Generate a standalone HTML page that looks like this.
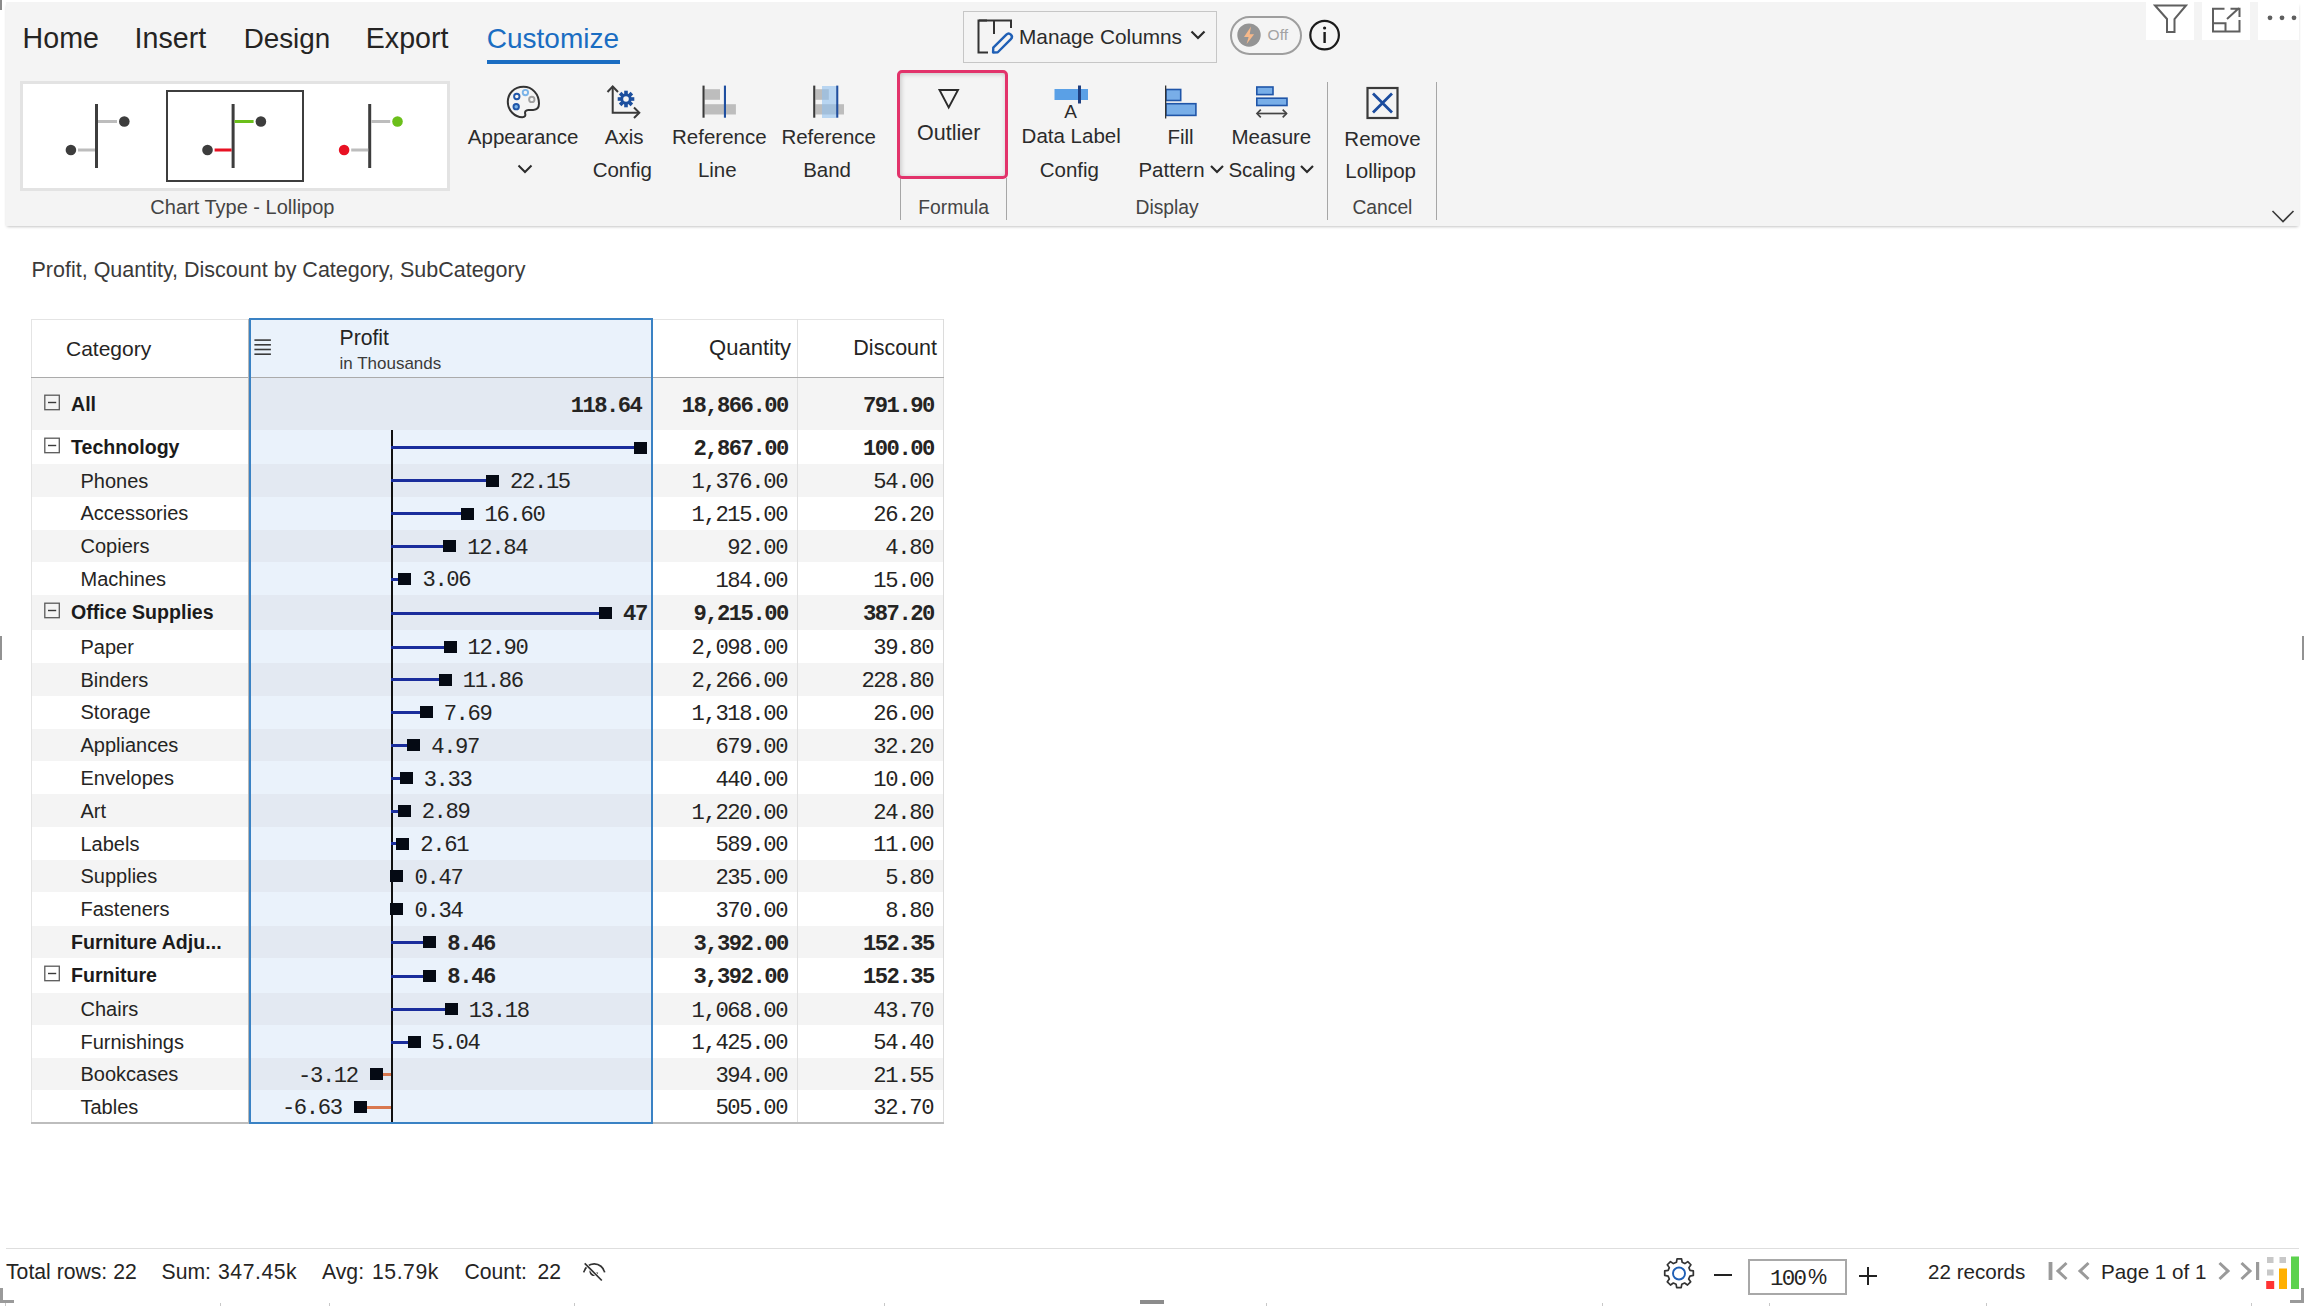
<!DOCTYPE html>
<html><head><meta charset="utf-8"><title>Lollipop</title>
<style>
html,body{margin:0;padding:0;}
body{width:2304px;height:1306px;position:relative;overflow:hidden;background:#fff;font-family:"Liberation Sans",sans-serif;}
.t{position:absolute;white-space:nowrap;}
</style></head><body>

<div style="position:absolute;left:6px;top:2px;width:2293px;height:224px;background:#f4f4f4;box-shadow:0 1.5px 3px -1px rgba(0,0,0,0.3);"></div>
<div style="position:absolute;left:0px;top:0px;width:2px;height:10px;background:#8a8a8a;"></div>
<div class="t" style="left:22.60px;top:24.39px;font:normal 28.6px/28.6px 'Liberation Sans', sans-serif;color:#252423;">Home</div>
<div class="t" style="left:134.60px;top:24.39px;font:normal 28.6px/28.6px 'Liberation Sans', sans-serif;color:#252423;">Insert</div>
<div class="t" style="left:243.70px;top:25.07px;font:normal 27.8px/27.8px 'Liberation Sans', sans-serif;color:#252423;">Design</div>
<div class="t" style="left:365.80px;top:24.39px;font:normal 28.6px/28.6px 'Liberation Sans', sans-serif;color:#252423;">Export</div>
<div class="t" style="left:486.80px;top:24.90px;font:normal 28.0px/28.0px 'Liberation Sans', sans-serif;color:#1a6dc2;">Customize</div>
<div style="position:absolute;left:487px;top:60px;width:133px;height:4px;background:#1a6dc2;"></div>
<div style="position:absolute;left:20px;top:81px;width:430px;height:110px;background:#fff;border:3px solid #e3e3e3;box-sizing:border-box;"></div>
<div style="position:absolute;left:166px;top:90px;width:138px;height:92px;border:2px solid #3d3d3d;box-sizing:border-box;"></div>
<svg style="position:absolute;left:0px;top:0px;" width="460" height="200" viewBox="0 0 460 200"><rect x="95" y="104" width="3" height="64" fill="#3d3d3d"/><rect x="98" y="120" width="19" height="3" fill="#bdbdbd"/><circle cx="124.3" cy="121.5" r="5.3" fill="#3d3d3d"/><rect x="78" y="148.5" width="17" height="3" fill="#bdbdbd"/><circle cx="70.9" cy="150" r="5.3" fill="#3d3d3d"/><rect x="231.6" y="104" width="3" height="64" fill="#3d3d3d"/><rect x="234.6" y="120" width="19" height="3" fill="#6bbf1a"/><circle cx="260.9" cy="121.5" r="5.3" fill="#3d3d3d"/><rect x="214.6" y="148.5" width="17" height="3" fill="#e81123"/><circle cx="207.5" cy="150" r="5.3" fill="#3d3d3d"/><rect x="368.2" y="104" width="3" height="64" fill="#3d3d3d"/><rect x="371.2" y="120" width="19" height="3" fill="#bdbdbd"/><circle cx="397.5" cy="121.5" r="5.3" fill="#6bbf1a"/><rect x="351.2" y="148.5" width="17" height="3" fill="#bdbdbd"/><circle cx="344.09999999999997" cy="150" r="5.3" fill="#e81123"/></svg>
<div class="t" style="left:-57.60px;width:600px;text-align:center;top:197.07px;font:normal 20.0px/20.0px 'Liberation Sans', sans-serif;color:#444;">Chart Type - Lollipop</div>
<svg style="position:absolute;left:505px;top:84px;" width="38" height="38" viewBox="0 0 38 38">
<path d="M18.5 2.8 C9 2.8 2.8 9.5 2.8 17.8 C2.8 26.5 9.8 33.2 17.3 33.2 C20 33.2 20.7 31.6 20.2 29.8 C19.6 27.6 20.8 25.9 23.3 25.9 L28.2 25.9 C32 25.9 34 23.2 34 19.6 C34 10 27.3 2.8 18.5 2.8 Z" fill="none" stroke="#333" stroke-width="2"/>
<circle cx="11.8" cy="12.5" r="2.7" fill="none" stroke="#1f55a8" stroke-width="1.9"/>
<circle cx="20.4" cy="8.6" r="2.7" fill="none" stroke="#7ab3e8" stroke-width="1.9"/>
<circle cx="26.8" cy="15.4" r="2.7" fill="none" stroke="#a0a0a0" stroke-width="1.9"/>
<circle cx="11.2" cy="22.7" r="2.7" fill="#7ab3e8" stroke="#1f55a8" stroke-width="1.9"/>
</svg>
<div class="t" style="left:223.10px;width:600px;text-align:center;top:126.55px;font:normal 20.5px/20.5px 'Liberation Sans', sans-serif;color:#2b2b2b;">Appearance</div>
<svg style="position:absolute;left:515px;top:162px;" width="20" height="14" viewBox="0 0 20 14"><path d="M3.5 3.5 L10 10 L16.5 3.5" fill="none" stroke="#2b2b2b" stroke-width="2"/></svg>
<svg style="position:absolute;left:598px;top:82px;" width="46" height="40" viewBox="0 0 46 40">
<path d="M14.7 4.5 L14.7 30.7 L41 30.7" fill="none" stroke="#3a3a3a" stroke-width="2"/>
<path d="M9.5 10 L14.7 4.5 L20 10" fill="none" stroke="#3a3a3a" stroke-width="2"/>
<path d="M36 25.5 L41.3 30.7 L36 36" fill="none" stroke="#3a3a3a" stroke-width="2"/>
<g transform="translate(28,17)">
<circle r="5.6" fill="#1c4f9e"/>
<g fill="#1c4f9e">
<rect x="-1.8" y="-8.3" width="3.6" height="16.6"/>
<rect x="-1.8" y="-8.3" width="3.6" height="16.6" transform="rotate(45)"/>
<rect x="-1.8" y="-8.3" width="3.6" height="16.6" transform="rotate(90)"/>
<rect x="-1.8" y="-8.3" width="3.6" height="16.6" transform="rotate(135)"/>
</g>
<circle r="2.8" fill="#f4f4f4"/>
</g>
</svg>
<div class="t" style="left:324.20px;width:600px;text-align:center;top:126.55px;font:normal 20.5px/20.5px 'Liberation Sans', sans-serif;color:#2b2b2b;">Axis</div>
<div class="t" style="left:322.30px;width:600px;text-align:center;top:159.65px;font:normal 20.5px/20.5px 'Liberation Sans', sans-serif;color:#2b2b2b;">Config</div>
<svg style="position:absolute;left:700px;top:84px;" width="40" height="36" viewBox="0 0 40 36">
<rect x="4.6" y="5.2" width="15.4" height="10.6" fill="#bdbdbd"/>
<rect x="4.6" y="20.2" width="31.3" height="10.3" fill="#bdbdbd"/>
<rect x="2.5" y="1.6" width="2.1" height="32.1" fill="#3a3a3a"/>
<rect x="23.9" y="1.6" width="2.1" height="32.1" fill="#1f4fa0"/>
</svg>
<div class="t" style="left:419.30px;width:600px;text-align:center;top:126.55px;font:normal 20.5px/20.5px 'Liberation Sans', sans-serif;color:#2b2b2b;">Reference</div>
<div class="t" style="left:417.30px;width:600px;text-align:center;top:159.65px;font:normal 20.5px/20.5px 'Liberation Sans', sans-serif;color:#2b2b2b;">Line</div>
<svg style="position:absolute;left:810px;top:84px;" width="40" height="36" viewBox="0 0 40 36">
<rect x="5.4" y="5.2" width="13.4" height="10.6" fill="#bdbdbd"/>
<rect x="5.4" y="20.2" width="28.6" height="10.3" fill="#bdbdbd"/>
<rect x="12" y="2" width="14.2" height="32" fill="#8fc0ef" fill-opacity="0.6"/>
<rect x="3.2" y="1.6" width="2.1" height="32.1" fill="#3a3a3a"/>
<rect x="26.2" y="1.6" width="2.1" height="32.1" fill="#1f4fa0"/>
</svg>
<div class="t" style="left:528.70px;width:600px;text-align:center;top:126.55px;font:normal 20.5px/20.5px 'Liberation Sans', sans-serif;color:#2b2b2b;">Reference</div>
<div class="t" style="left:527.10px;width:600px;text-align:center;top:159.65px;font:normal 20.5px/20.5px 'Liberation Sans', sans-serif;color:#2b2b2b;">Band</div>
<div style="position:absolute;left:900px;top:178px;width:1.3px;height:42px;background:#a6a6a6;"></div>
<div style="position:absolute;left:1006px;top:178px;width:1.3px;height:42px;background:#a6a6a6;"></div>
<div style="position:absolute;left:1327px;top:82px;width:1.3px;height:138px;background:#a6a6a6;"></div>
<div style="position:absolute;left:1435.6px;top:82px;width:1.3px;height:138px;background:#a6a6a6;"></div>
<div style="position:absolute;left:897px;top:70px;width:111px;height:108.5px;border:3px solid #e2336b;border-radius:5px;box-sizing:border-box;box-shadow:inset 1px 1px 5px rgba(0,0,0,0.2);"></div>
<svg style="position:absolute;left:934px;top:86px;" width="30" height="26" viewBox="0 0 30 26"><path d="M5.5 4 L24 4 L14.7 21.5 Z" fill="none" stroke="#2b2b2b" stroke-width="1.9" stroke-linejoin="miter"/></svg>
<div class="t" style="left:648.70px;width:600px;text-align:center;top:122.80px;font:normal 21.5px/21.5px 'Liberation Sans', sans-serif;color:#2b2b2b;">Outlier</div>
<div class="t" style="left:653.60px;width:600px;text-align:center;top:197.86px;font:normal 19.3px/19.3px 'Liberation Sans', sans-serif;color:#444;">Formula</div>
<svg style="position:absolute;left:1050px;top:82px;" width="42" height="40" viewBox="0 0 42 40">
<rect x="4.5" y="7" width="33.5" height="11" fill="#5aa0e6"/>
<rect x="28" y="3.5" width="3" height="18" fill="#1f3f80"/>
<text x="20.5" y="35.5" font-family="Liberation Sans" font-weight="normal" font-size="19" fill="#2b2b2b" text-anchor="middle">A</text>
</svg>
<div class="t" style="left:771.20px;width:600px;text-align:center;top:126.15px;font:normal 20.5px/20.5px 'Liberation Sans', sans-serif;color:#2b2b2b;">Data Label</div>
<div class="t" style="left:769.40px;width:600px;text-align:center;top:159.65px;font:normal 20.5px/20.5px 'Liberation Sans', sans-serif;color:#2b2b2b;">Config</div>
<svg style="position:absolute;left:1160px;top:82px;" width="42" height="40" viewBox="0 0 42 40">
<rect x="6" y="7.5" width="14.7" height="11" fill="#78aee8" stroke="#1f55a8" stroke-width="1.6"/>
<rect x="6" y="21.7" width="29.9" height="11.7" fill="#78aee8" stroke="#1f55a8" stroke-width="1.6"/>
<rect x="5" y="3.5" width="1.3" height="33" fill="#333"/>
</svg>
<div class="t" style="left:880.50px;width:600px;text-align:center;top:126.85px;font:normal 20.5px/20.5px 'Liberation Sans', sans-serif;color:#2b2b2b;">Fill</div>
<div class="t" style="left:871.50px;width:600px;text-align:center;top:159.85px;font:normal 20.5px/20.5px 'Liberation Sans', sans-serif;color:#2b2b2b;">Pattern</div>
<svg style="position:absolute;left:1207px;top:161px;" width="20" height="16" viewBox="0 0 20 16"><path d="M4 5 L10 11 L16 5" fill="none" stroke="#2b2b2b" stroke-width="2.2"/></svg>
<svg style="position:absolute;left:1250px;top:82px;" width="42" height="40" viewBox="0 0 42 40">
<rect x="6.8" y="5" width="16.2" height="7.6" fill="#78aee8" stroke="#1f55a8" stroke-width="1.6"/>
<rect x="6.8" y="16.2" width="30.2" height="7.3" fill="#78aee8" stroke="#1f55a8" stroke-width="1.6"/>
<path d="M7 31.5 L36.5 31.5" stroke="#444" stroke-width="1.7"/>
<path d="M10.8 27.7 L7 31.5 L10.8 35.3 M32.7 27.7 L36.5 31.5 L32.7 35.3" fill="none" stroke="#444" stroke-width="1.7"/>
</svg>
<div class="t" style="left:971.40px;width:600px;text-align:center;top:126.85px;font:normal 20.5px/20.5px 'Liberation Sans', sans-serif;color:#2b2b2b;">Measure</div>
<div class="t" style="left:962.00px;width:600px;text-align:center;top:159.85px;font:normal 20.5px/20.5px 'Liberation Sans', sans-serif;color:#2b2b2b;">Scaling</div>
<svg style="position:absolute;left:1297px;top:161px;" width="20" height="16" viewBox="0 0 20 16"><path d="M4 5 L10 11 L16 5" fill="none" stroke="#2b2b2b" stroke-width="2.2"/></svg>
<div class="t" style="left:867.10px;width:600px;text-align:center;top:198.06px;font:normal 19.3px/19.3px 'Liberation Sans', sans-serif;color:#444;">Display</div>
<svg style="position:absolute;left:1362px;top:84px;" width="40" height="40" viewBox="0 0 40 40">
<rect x="5.5" y="4" width="30" height="30" fill="none" stroke="#3a3a3a" stroke-width="2.2"/>
<path d="M11 9.5 L30 28.5 M30 9.5 L11 28.5" stroke="#1b4c9e" stroke-width="2.8"/>
</svg>
<div class="t" style="left:1082.50px;width:600px;text-align:center;top:128.65px;font:normal 20.5px/20.5px 'Liberation Sans', sans-serif;color:#2b2b2b;">Remove</div>
<div class="t" style="left:1080.70px;width:600px;text-align:center;top:160.85px;font:normal 20.5px/20.5px 'Liberation Sans', sans-serif;color:#2b2b2b;">Lollipop</div>
<div class="t" style="left:1082.40px;width:600px;text-align:center;top:198.06px;font:normal 19.3px/19.3px 'Liberation Sans', sans-serif;color:#444;">Cancel</div>
<div style="position:absolute;left:962.5px;top:11px;width:254.5px;height:51.5px;border:1.5px solid #c6c6c6;box-sizing:border-box;"></div>
<svg style="position:absolute;left:973.5px;top:15.5px;" width="42" height="42" viewBox="0 0 42 42">
<path d="M13 4.5 L4.5 4.5 L4.5 36.5 L14 36.5" fill="none" stroke="#333" stroke-width="2"/>
<path d="M5 4.5 L37 4.5 L37 12" fill="none" stroke="#333" stroke-width="2"/>
<path d="M20 5 L20 18" fill="none" stroke="#333" stroke-width="2"/>
<g transform="translate(27.9,27.6) rotate(-45)"><path d="M-12.5 0 L-9 -3.2 L9.5 -3.2 Q12.7 -3.2 12.7 0 Q12.7 3.2 9.5 3.2 L-9 3.2 Z" fill="none" stroke="#1f5fb5" stroke-width="2.4" stroke-linejoin="round"/></g>
</svg>
<div class="t" style="left:1019.00px;top:26.89px;font:normal 20.8px/20.8px 'Liberation Sans', sans-serif;color:#2b2b2b;">Manage Columns</div>
<svg style="position:absolute;left:1188px;top:28px;" width="20" height="14" viewBox="0 0 20 14"><path d="M3.5 3.5 L10 10 L16.5 3.5" fill="none" stroke="#2b2b2b" stroke-width="2.2"/></svg>
<div style="position:absolute;left:1230px;top:16px;width:72px;height:39px;border:2px solid #9e9e9e;border-radius:20px;box-sizing:border-box;"></div>
<svg style="position:absolute;left:1237px;top:23px;" width="24" height="24" viewBox="0 0 24 24">
<circle cx="12" cy="12.1" r="11.7" fill="#949494"/>
<path d="M14 3.6 L7 14 L11.6 14 L9.6 21.1 L17.1 11.3 L12.7 11.3 Z" fill="#f7b98a"/>
</svg>
<div class="t" style="left:977.80px;width:600px;text-align:center;top:27.48px;font:normal 15.5px/15.5px 'Liberation Sans', sans-serif;color:#a3a3a3;">Off</div>
<svg style="position:absolute;left:1308px;top:19px;" width="34" height="34" viewBox="0 0 34 34">
<circle cx="16.6" cy="16.1" r="14.3" fill="none" stroke="#1a1a1a" stroke-width="2.2"/>
<rect x="15.4" y="13" width="2.4" height="11" fill="#1a1a1a"/>
<circle cx="16.6" cy="9" r="1.6" fill="#1a1a1a"/>
</svg>
<div style="position:absolute;left:2146px;top:0px;width:48px;height:40px;background:#fff;"></div>
<div style="position:absolute;left:2202px;top:0px;width:48px;height:40px;background:#fff;"></div>
<div style="position:absolute;left:2258px;top:0px;width:41px;height:40px;background:#fff;"></div>
<svg style="position:absolute;left:2150px;top:0px;" width="40" height="40" viewBox="0 0 40 40"><path d="M5 5.5 L36 5.5 L24.5 19 L24.5 32 L17 32 L17 19 Z" fill="none" stroke="#5f5f5f" stroke-width="2"/></svg>
<svg style="position:absolute;left:2208px;top:4px;" width="36" height="32" viewBox="0 0 36 32">
<path d="M16.5 4.7 L5 4.7 L5 27.4 L31.5 27.4 L31.5 16" fill="none" stroke="#5f5f5f" stroke-width="2"/>
<path d="M5 19.2 L17.5 19.2 L17.5 27.4" fill="none" stroke="#5f5f5f" stroke-width="2"/>
<path d="M19 15 L31 4 M22.5 4.7 L31.5 4.7 L31.5 13" fill="none" stroke="#5f5f5f" stroke-width="2"/>
</svg>
<svg style="position:absolute;left:2262px;top:8px;" width="40" height="20" viewBox="0 0 40 20"><circle cx="8" cy="9.8" r="2.4" fill="#5f5f5f"/><circle cx="20" cy="9.8" r="2.4" fill="#5f5f5f"/><circle cx="32" cy="9.8" r="2.4" fill="#5f5f5f"/></svg>
<svg style="position:absolute;left:2268px;top:206px;" width="30" height="20" viewBox="0 0 30 20"><path d="M4.5 5 L15 15.5 L25.5 5" fill="none" stroke="#3a3a3a" stroke-width="1.6"/></svg>
<div class="t" style="left:31.50px;top:260.10px;font:normal 21.5px/21.5px 'Liberation Sans', sans-serif;color:#3b3a39;">Profit, Quantity, Discount by Category, SubCategory</div>
<div style="position:absolute;left:31px;top:319px;width:913px;height:59px;background:#fff;"></div>
<div style="position:absolute;left:31px;top:378px;width:913px;height:52px;background:#f4f4f4;"></div>
<div style="position:absolute;left:251px;top:378px;width:400px;height:52px;background:#e3e9f2;"></div>
<div style="position:absolute;left:31px;top:430px;width:913px;height:34px;background:#ffffff;"></div>
<div style="position:absolute;left:251px;top:430px;width:400px;height:34px;background:#eaf2fb;"></div>
<div style="position:absolute;left:31px;top:464px;width:913px;height:32.5px;background:#f4f4f4;"></div>
<div style="position:absolute;left:251px;top:464px;width:400px;height:32.5px;background:#e3e9f2;"></div>
<div style="position:absolute;left:31px;top:496.5px;width:913px;height:33.0px;background:#ffffff;"></div>
<div style="position:absolute;left:251px;top:496.5px;width:400px;height:33.0px;background:#eaf2fb;"></div>
<div style="position:absolute;left:31px;top:529.5px;width:913px;height:32.5px;background:#f4f4f4;"></div>
<div style="position:absolute;left:251px;top:529.5px;width:400px;height:32.5px;background:#e3e9f2;"></div>
<div style="position:absolute;left:31px;top:562px;width:913px;height:33px;background:#ffffff;"></div>
<div style="position:absolute;left:251px;top:562px;width:400px;height:33px;background:#eaf2fb;"></div>
<div style="position:absolute;left:31px;top:595px;width:913px;height:34.60000000000002px;background:#f4f4f4;"></div>
<div style="position:absolute;left:251px;top:595px;width:400px;height:34.60000000000002px;background:#e3e9f2;"></div>
<div style="position:absolute;left:31px;top:629.6px;width:913px;height:33.39999999999998px;background:#ffffff;"></div>
<div style="position:absolute;left:251px;top:629.6px;width:400px;height:33.39999999999998px;background:#eaf2fb;"></div>
<div style="position:absolute;left:31px;top:663px;width:913px;height:32.5px;background:#f4f4f4;"></div>
<div style="position:absolute;left:251px;top:663px;width:400px;height:32.5px;background:#e3e9f2;"></div>
<div style="position:absolute;left:31px;top:695.5px;width:913px;height:33.0px;background:#ffffff;"></div>
<div style="position:absolute;left:251px;top:695.5px;width:400px;height:33.0px;background:#eaf2fb;"></div>
<div style="position:absolute;left:31px;top:728.5px;width:913px;height:32.5px;background:#f4f4f4;"></div>
<div style="position:absolute;left:251px;top:728.5px;width:400px;height:32.5px;background:#e3e9f2;"></div>
<div style="position:absolute;left:31px;top:761px;width:913px;height:33.299999999999955px;background:#ffffff;"></div>
<div style="position:absolute;left:251px;top:761px;width:400px;height:33.299999999999955px;background:#eaf2fb;"></div>
<div style="position:absolute;left:31px;top:794.3px;width:913px;height:32.30000000000007px;background:#f4f4f4;"></div>
<div style="position:absolute;left:251px;top:794.3px;width:400px;height:32.30000000000007px;background:#e3e9f2;"></div>
<div style="position:absolute;left:31px;top:826.6px;width:913px;height:33.19999999999993px;background:#ffffff;"></div>
<div style="position:absolute;left:251px;top:826.6px;width:400px;height:33.19999999999993px;background:#eaf2fb;"></div>
<div style="position:absolute;left:31px;top:859.8px;width:913px;height:32.30000000000007px;background:#f4f4f4;"></div>
<div style="position:absolute;left:251px;top:859.8px;width:400px;height:32.30000000000007px;background:#e3e9f2;"></div>
<div style="position:absolute;left:31px;top:892.1px;width:913px;height:33.5px;background:#ffffff;"></div>
<div style="position:absolute;left:251px;top:892.1px;width:400px;height:33.5px;background:#eaf2fb;"></div>
<div style="position:absolute;left:31px;top:925.6px;width:913px;height:32.39999999999998px;background:#f4f4f4;"></div>
<div style="position:absolute;left:251px;top:925.6px;width:400px;height:32.39999999999998px;background:#e3e9f2;"></div>
<div style="position:absolute;left:31px;top:958px;width:913px;height:34.799999999999955px;background:#ffffff;"></div>
<div style="position:absolute;left:251px;top:958px;width:400px;height:34.799999999999955px;background:#eaf2fb;"></div>
<div style="position:absolute;left:31px;top:992.8px;width:913px;height:32.200000000000045px;background:#f4f4f4;"></div>
<div style="position:absolute;left:251px;top:992.8px;width:400px;height:32.200000000000045px;background:#e3e9f2;"></div>
<div style="position:absolute;left:31px;top:1025px;width:913px;height:32.700000000000045px;background:#ffffff;"></div>
<div style="position:absolute;left:251px;top:1025px;width:400px;height:32.700000000000045px;background:#eaf2fb;"></div>
<div style="position:absolute;left:31px;top:1057.7px;width:913px;height:32.59999999999991px;background:#f4f4f4;"></div>
<div style="position:absolute;left:251px;top:1057.7px;width:400px;height:32.59999999999991px;background:#e3e9f2;"></div>
<div style="position:absolute;left:31px;top:1090.3px;width:913px;height:32.200000000000045px;background:#ffffff;"></div>
<div style="position:absolute;left:251px;top:1090.3px;width:400px;height:32.200000000000045px;background:#eaf2fb;"></div>
<div style="position:absolute;left:251px;top:320px;width:400px;height:58px;background:#eaf2fb;"></div>
<div style="position:absolute;left:31px;top:318.5px;width:913px;height:1px;background:#e4e4e4;"></div>
<div style="position:absolute;left:31px;top:319px;width:1px;height:804px;background:#e4e4e4;"></div>
<div style="position:absolute;left:943px;top:319px;width:1px;height:804px;background:#dcdcdc;"></div>
<div style="position:absolute;left:797px;top:319px;width:1px;height:804px;background:#e0e0e0;"></div>
<div style="position:absolute;left:31px;top:376.5px;width:913px;height:1.6px;background:#ababab;"></div>
<div style="position:absolute;left:31px;top:1122px;width:913px;height:1.5px;background:#bdbdbd;"></div>
<div style="position:absolute;left:248px;top:319px;width:1px;height:804px;background:#b8b8b8;"></div>
<div class="t" style="left:66.00px;top:337.62px;font:normal 21px/21px 'Liberation Sans', sans-serif;color:#252423;">Category</div>
<div class="t" style="left:339.50px;top:327.45px;font:normal 21.2px/21.2px 'Liberation Sans', sans-serif;color:#252423;">Profit</div>
<div class="t" style="left:339.50px;top:355.21px;font:normal 17px/17px 'Liberation Sans', sans-serif;color:#3b3a39;">in Thousands</div>
<div class="t" style="left:191.00px;width:600px;text-align:right;top:337.38px;font:normal 22.0px/22.0px 'Liberation Sans', sans-serif;color:#252423;">Quantity</div>
<div class="t" style="left:337.00px;width:600px;text-align:right;top:337.80px;font:normal 21.5px/21.5px 'Liberation Sans', sans-serif;color:#252423;">Discount</div>
<svg style="position:absolute;left:252px;top:336px;" width="22" height="22" viewBox="0 0 22 22"><rect x="2.4" y="3.3" width="16.5" height="1.6" fill="#3a3a3a"/><rect x="2.4" y="8.0" width="16.5" height="1.6" fill="#3a3a3a"/><rect x="2.4" y="12.7" width="16.5" height="1.6" fill="#3a3a3a"/><rect x="2.4" y="17.4" width="16.5" height="1.6" fill="#3a3a3a"/></svg>
<svg style="position:absolute;left:43px;top:393px;" width="18" height="18" viewBox="0 0 18 18"><rect x="1.8" y="2.2" width="14.5" height="14.5" fill="none" stroke="#5a5a5a" stroke-width="1.3"/><rect x="5" y="8.8" width="8.2" height="1.4" fill="#3a3a3a"/></svg>
<div class="t" style="left:71.00px;top:394.71px;font:bold 19.6px/19.6px 'Liberation Sans', sans-serif;color:#1b1b1b;">All</div>
<div class="t" style="left:487.70px;width:300px;text-align:right;top:396.08px;font:bold 22.2px/22.2px 'Liberation Mono', monospace;color:#252423;letter-spacing:-1.55px;">18,866.00</div>
<div class="t" style="left:633.70px;width:300px;text-align:right;top:396.08px;font:bold 22.2px/22.2px 'Liberation Mono', monospace;color:#252423;letter-spacing:-1.55px;">791.90</div>
<div class="t" style="left:341.30px;width:300px;text-align:right;top:396.08px;font:bold 22.2px/22.2px 'Liberation Mono', monospace;color:#252423;letter-spacing:-1.55px;">118.64</div>
<svg style="position:absolute;left:43px;top:436px;" width="18" height="18" viewBox="0 0 18 18"><rect x="1.8" y="2.2" width="14.5" height="14.5" fill="none" stroke="#5a5a5a" stroke-width="1.3"/><rect x="5" y="8.8" width="8.2" height="1.4" fill="#3a3a3a"/></svg>
<div class="t" style="left:71.00px;top:437.71px;font:bold 19.6px/19.6px 'Liberation Sans', sans-serif;color:#1b1b1b;">Technology</div>
<div class="t" style="left:487.70px;width:300px;text-align:right;top:439.08px;font:bold 22.2px/22.2px 'Liberation Mono', monospace;color:#252423;letter-spacing:-1.55px;">2,867.00</div>
<div class="t" style="left:633.70px;width:300px;text-align:right;top:439.08px;font:bold 22.2px/22.2px 'Liberation Mono', monospace;color:#252423;letter-spacing:-1.55px;">100.00</div>
<div class="t" style="left:80.50px;top:470.62px;font:normal 20.0px/20.0px 'Liberation Sans', sans-serif;color:#252423;">Phones</div>
<div class="t" style="left:487.20px;width:300px;text-align:right;top:472.33px;font:normal 22.2px/22.2px 'Liberation Mono', monospace;color:#252423;letter-spacing:-1.35px;">1,376.00</div>
<div class="t" style="left:633.20px;width:300px;text-align:right;top:472.33px;font:normal 22.2px/22.2px 'Liberation Mono', monospace;color:#252423;letter-spacing:-1.35px;">54.00</div>
<div class="t" style="left:80.50px;top:503.37px;font:normal 20.0px/20.0px 'Liberation Sans', sans-serif;color:#252423;">Accessories</div>
<div class="t" style="left:487.20px;width:300px;text-align:right;top:505.08px;font:normal 22.2px/22.2px 'Liberation Mono', monospace;color:#252423;letter-spacing:-1.35px;">1,215.00</div>
<div class="t" style="left:633.20px;width:300px;text-align:right;top:505.08px;font:normal 22.2px/22.2px 'Liberation Mono', monospace;color:#252423;letter-spacing:-1.35px;">26.20</div>
<div class="t" style="left:80.50px;top:536.12px;font:normal 20.0px/20.0px 'Liberation Sans', sans-serif;color:#252423;">Copiers</div>
<div class="t" style="left:487.20px;width:300px;text-align:right;top:537.83px;font:normal 22.2px/22.2px 'Liberation Mono', monospace;color:#252423;letter-spacing:-1.35px;">92.00</div>
<div class="t" style="left:633.20px;width:300px;text-align:right;top:537.83px;font:normal 22.2px/22.2px 'Liberation Mono', monospace;color:#252423;letter-spacing:-1.35px;">4.80</div>
<div class="t" style="left:80.50px;top:568.87px;font:normal 20.0px/20.0px 'Liberation Sans', sans-serif;color:#252423;">Machines</div>
<div class="t" style="left:487.20px;width:300px;text-align:right;top:570.58px;font:normal 22.2px/22.2px 'Liberation Mono', monospace;color:#252423;letter-spacing:-1.35px;">184.00</div>
<div class="t" style="left:633.20px;width:300px;text-align:right;top:570.58px;font:normal 22.2px/22.2px 'Liberation Mono', monospace;color:#252423;letter-spacing:-1.35px;">15.00</div>
<svg style="position:absolute;left:43px;top:601px;" width="18" height="18" viewBox="0 0 18 18"><rect x="1.8" y="2.2" width="14.5" height="14.5" fill="none" stroke="#5a5a5a" stroke-width="1.3"/><rect x="5" y="8.8" width="8.2" height="1.4" fill="#3a3a3a"/></svg>
<div class="t" style="left:71.00px;top:603.01px;font:bold 19.6px/19.6px 'Liberation Sans', sans-serif;color:#1b1b1b;">Office Supplies</div>
<div class="t" style="left:487.70px;width:300px;text-align:right;top:604.38px;font:bold 22.2px/22.2px 'Liberation Mono', monospace;color:#252423;letter-spacing:-1.55px;">9,215.00</div>
<div class="t" style="left:633.70px;width:300px;text-align:right;top:604.38px;font:bold 22.2px/22.2px 'Liberation Mono', monospace;color:#252423;letter-spacing:-1.55px;">387.20</div>
<div class="t" style="left:80.50px;top:636.67px;font:normal 20.0px/20.0px 'Liberation Sans', sans-serif;color:#252423;">Paper</div>
<div class="t" style="left:487.20px;width:300px;text-align:right;top:638.38px;font:normal 22.2px/22.2px 'Liberation Mono', monospace;color:#252423;letter-spacing:-1.35px;">2,098.00</div>
<div class="t" style="left:633.20px;width:300px;text-align:right;top:638.38px;font:normal 22.2px/22.2px 'Liberation Mono', monospace;color:#252423;letter-spacing:-1.35px;">39.80</div>
<div class="t" style="left:80.50px;top:669.62px;font:normal 20.0px/20.0px 'Liberation Sans', sans-serif;color:#252423;">Binders</div>
<div class="t" style="left:487.20px;width:300px;text-align:right;top:671.33px;font:normal 22.2px/22.2px 'Liberation Mono', monospace;color:#252423;letter-spacing:-1.35px;">2,266.00</div>
<div class="t" style="left:633.20px;width:300px;text-align:right;top:671.33px;font:normal 22.2px/22.2px 'Liberation Mono', monospace;color:#252423;letter-spacing:-1.35px;">228.80</div>
<div class="t" style="left:80.50px;top:702.37px;font:normal 20.0px/20.0px 'Liberation Sans', sans-serif;color:#252423;">Storage</div>
<div class="t" style="left:487.20px;width:300px;text-align:right;top:704.08px;font:normal 22.2px/22.2px 'Liberation Mono', monospace;color:#252423;letter-spacing:-1.35px;">1,318.00</div>
<div class="t" style="left:633.20px;width:300px;text-align:right;top:704.08px;font:normal 22.2px/22.2px 'Liberation Mono', monospace;color:#252423;letter-spacing:-1.35px;">26.00</div>
<div class="t" style="left:80.50px;top:735.12px;font:normal 20.0px/20.0px 'Liberation Sans', sans-serif;color:#252423;">Appliances</div>
<div class="t" style="left:487.20px;width:300px;text-align:right;top:736.83px;font:normal 22.2px/22.2px 'Liberation Mono', monospace;color:#252423;letter-spacing:-1.35px;">679.00</div>
<div class="t" style="left:633.20px;width:300px;text-align:right;top:736.83px;font:normal 22.2px/22.2px 'Liberation Mono', monospace;color:#252423;letter-spacing:-1.35px;">32.20</div>
<div class="t" style="left:80.50px;top:768.02px;font:normal 20.0px/20.0px 'Liberation Sans', sans-serif;color:#252423;">Envelopes</div>
<div class="t" style="left:487.20px;width:300px;text-align:right;top:769.73px;font:normal 22.2px/22.2px 'Liberation Mono', monospace;color:#252423;letter-spacing:-1.35px;">440.00</div>
<div class="t" style="left:633.20px;width:300px;text-align:right;top:769.73px;font:normal 22.2px/22.2px 'Liberation Mono', monospace;color:#252423;letter-spacing:-1.35px;">10.00</div>
<div class="t" style="left:80.50px;top:800.82px;font:normal 20.0px/20.0px 'Liberation Sans', sans-serif;color:#252423;">Art</div>
<div class="t" style="left:487.20px;width:300px;text-align:right;top:802.53px;font:normal 22.2px/22.2px 'Liberation Mono', monospace;color:#252423;letter-spacing:-1.35px;">1,220.00</div>
<div class="t" style="left:633.20px;width:300px;text-align:right;top:802.53px;font:normal 22.2px/22.2px 'Liberation Mono', monospace;color:#252423;letter-spacing:-1.35px;">24.80</div>
<div class="t" style="left:80.50px;top:833.57px;font:normal 20.0px/20.0px 'Liberation Sans', sans-serif;color:#252423;">Labels</div>
<div class="t" style="left:487.20px;width:300px;text-align:right;top:835.28px;font:normal 22.2px/22.2px 'Liberation Mono', monospace;color:#252423;letter-spacing:-1.35px;">589.00</div>
<div class="t" style="left:633.20px;width:300px;text-align:right;top:835.28px;font:normal 22.2px/22.2px 'Liberation Mono', monospace;color:#252423;letter-spacing:-1.35px;">11.00</div>
<div class="t" style="left:80.50px;top:866.32px;font:normal 20.0px/20.0px 'Liberation Sans', sans-serif;color:#252423;">Supplies</div>
<div class="t" style="left:487.20px;width:300px;text-align:right;top:868.03px;font:normal 22.2px/22.2px 'Liberation Mono', monospace;color:#252423;letter-spacing:-1.35px;">235.00</div>
<div class="t" style="left:633.20px;width:300px;text-align:right;top:868.03px;font:normal 22.2px/22.2px 'Liberation Mono', monospace;color:#252423;letter-spacing:-1.35px;">5.80</div>
<div class="t" style="left:80.50px;top:899.22px;font:normal 20.0px/20.0px 'Liberation Sans', sans-serif;color:#252423;">Fasteners</div>
<div class="t" style="left:487.20px;width:300px;text-align:right;top:900.93px;font:normal 22.2px/22.2px 'Liberation Mono', monospace;color:#252423;letter-spacing:-1.35px;">370.00</div>
<div class="t" style="left:633.20px;width:300px;text-align:right;top:900.93px;font:normal 22.2px/22.2px 'Liberation Mono', monospace;color:#252423;letter-spacing:-1.35px;">8.80</div>
<div class="t" style="left:71.00px;top:932.51px;font:bold 19.6px/19.6px 'Liberation Sans', sans-serif;color:#1b1b1b;">Furniture Adju...</div>
<div class="t" style="left:487.70px;width:300px;text-align:right;top:933.88px;font:bold 22.2px/22.2px 'Liberation Mono', monospace;color:#252423;letter-spacing:-1.55px;">3,392.00</div>
<div class="t" style="left:633.70px;width:300px;text-align:right;top:933.88px;font:bold 22.2px/22.2px 'Liberation Mono', monospace;color:#252423;letter-spacing:-1.55px;">152.35</div>
<svg style="position:absolute;left:43px;top:964px;" width="18" height="18" viewBox="0 0 18 18"><rect x="1.8" y="2.2" width="14.5" height="14.5" fill="none" stroke="#5a5a5a" stroke-width="1.3"/><rect x="5" y="8.8" width="8.2" height="1.4" fill="#3a3a3a"/></svg>
<div class="t" style="left:71.00px;top:966.11px;font:bold 19.6px/19.6px 'Liberation Sans', sans-serif;color:#1b1b1b;">Furniture</div>
<div class="t" style="left:487.70px;width:300px;text-align:right;top:967.48px;font:bold 22.2px/22.2px 'Liberation Mono', monospace;color:#252423;letter-spacing:-1.55px;">3,392.00</div>
<div class="t" style="left:633.70px;width:300px;text-align:right;top:967.48px;font:bold 22.2px/22.2px 'Liberation Mono', monospace;color:#252423;letter-spacing:-1.55px;">152.35</div>
<div class="t" style="left:80.50px;top:999.27px;font:normal 20.0px/20.0px 'Liberation Sans', sans-serif;color:#252423;">Chairs</div>
<div class="t" style="left:487.20px;width:300px;text-align:right;top:1000.98px;font:normal 22.2px/22.2px 'Liberation Mono', monospace;color:#252423;letter-spacing:-1.35px;">1,068.00</div>
<div class="t" style="left:633.20px;width:300px;text-align:right;top:1000.98px;font:normal 22.2px/22.2px 'Liberation Mono', monospace;color:#252423;letter-spacing:-1.35px;">43.70</div>
<div class="t" style="left:80.50px;top:1031.72px;font:normal 20.0px/20.0px 'Liberation Sans', sans-serif;color:#252423;">Furnishings</div>
<div class="t" style="left:487.20px;width:300px;text-align:right;top:1033.43px;font:normal 22.2px/22.2px 'Liberation Mono', monospace;color:#252423;letter-spacing:-1.35px;">1,425.00</div>
<div class="t" style="left:633.20px;width:300px;text-align:right;top:1033.43px;font:normal 22.2px/22.2px 'Liberation Mono', monospace;color:#252423;letter-spacing:-1.35px;">54.40</div>
<div class="t" style="left:80.50px;top:1064.37px;font:normal 20.0px/20.0px 'Liberation Sans', sans-serif;color:#252423;">Bookcases</div>
<div class="t" style="left:487.20px;width:300px;text-align:right;top:1066.08px;font:normal 22.2px/22.2px 'Liberation Mono', monospace;color:#252423;letter-spacing:-1.35px;">394.00</div>
<div class="t" style="left:633.20px;width:300px;text-align:right;top:1066.08px;font:normal 22.2px/22.2px 'Liberation Mono', monospace;color:#252423;letter-spacing:-1.35px;">21.55</div>
<div class="t" style="left:80.50px;top:1096.77px;font:normal 20.0px/20.0px 'Liberation Sans', sans-serif;color:#252423;">Tables</div>
<div class="t" style="left:487.20px;width:300px;text-align:right;top:1098.48px;font:normal 22.2px/22.2px 'Liberation Mono', monospace;color:#252423;letter-spacing:-1.35px;">505.00</div>
<div class="t" style="left:633.20px;width:300px;text-align:right;top:1098.48px;font:normal 22.2px/22.2px 'Liberation Mono', monospace;color:#252423;letter-spacing:-1.35px;">32.70</div>
<div style="position:absolute;left:251px;top:320px;width:397px;height:803px;overflow:hidden;">
<div style="position:absolute;left:140px;top:110px;width:2px;height:693px;background:#111;"></div>
<div style="position:absolute;left:140.00px;top:126.00px;width:249px;height:3px;background:#1a2d9c;"></div>
<div style="position:absolute;left:383.00px;top:122.00px;width:13px;height:12px;background:#050a14;"></div>
<div style="position:absolute;left:140.00px;top:159.00px;width:101px;height:3px;background:#1a2d9c;"></div>
<div style="position:absolute;left:235.00px;top:155.00px;width:13px;height:12px;background:#050a14;"></div>
<div class="t" style="left:259.00px;top:152.23px;font:normal 22.2px/22.2px 'Liberation Mono', monospace;color:#252423;letter-spacing:-1.35px;">22.15</div>
<div style="position:absolute;left:140.00px;top:192.00px;width:76px;height:3px;background:#1a2d9c;"></div>
<div style="position:absolute;left:210.00px;top:188.00px;width:13px;height:12px;background:#050a14;"></div>
<div class="t" style="left:233.54px;top:184.98px;font:normal 22.2px/22.2px 'Liberation Mono', monospace;color:#252423;letter-spacing:-1.35px;">16.60</div>
<div style="position:absolute;left:140.00px;top:225.00px;width:59px;height:3px;background:#1a2d9c;"></div>
<div style="position:absolute;left:192.00px;top:220.00px;width:13px;height:12px;background:#050a14;"></div>
<div class="t" style="left:216.30px;top:217.73px;font:normal 22.2px/22.2px 'Liberation Mono', monospace;color:#252423;letter-spacing:-1.35px;">12.84</div>
<div style="position:absolute;left:140.00px;top:258.00px;width:14px;height:3px;background:#1a2d9c;"></div>
<div style="position:absolute;left:147.00px;top:253.00px;width:13px;height:12px;background:#050a14;"></div>
<div class="t" style="left:171.44px;top:250.48px;font:normal 22.2px/22.2px 'Liberation Mono', monospace;color:#252423;letter-spacing:-1.35px;">3.06</div>
<div style="position:absolute;left:140.00px;top:292.00px;width:214px;height:3px;background:#1a2d9c;"></div>
<div style="position:absolute;left:348.00px;top:287.00px;width:13px;height:12px;background:#050a14;"></div>
<div class="t" style="left:372.07px;top:284.28px;font:bold 22.2px/22.2px 'Liberation Mono', monospace;color:#252423;letter-spacing:-1.35px;">47</div>
<div style="position:absolute;left:140.00px;top:326.00px;width:59px;height:3px;background:#1a2d9c;"></div>
<div style="position:absolute;left:193.00px;top:321.00px;width:13px;height:12px;background:#050a14;"></div>
<div class="t" style="left:216.57px;top:318.28px;font:normal 22.2px/22.2px 'Liberation Mono', monospace;color:#252423;letter-spacing:-1.35px;">12.90</div>
<div style="position:absolute;left:140.00px;top:358.00px;width:54px;height:3px;background:#1a2d9c;"></div>
<div style="position:absolute;left:188.00px;top:354.00px;width:13px;height:12px;background:#050a14;"></div>
<div class="t" style="left:211.80px;top:351.23px;font:normal 22.2px/22.2px 'Liberation Mono', monospace;color:#252423;letter-spacing:-1.35px;">11.86</div>
<div style="position:absolute;left:140.00px;top:391.00px;width:35px;height:3px;background:#1a2d9c;"></div>
<div style="position:absolute;left:169.00px;top:386.00px;width:13px;height:12px;background:#050a14;"></div>
<div class="t" style="left:192.67px;top:383.98px;font:normal 22.2px/22.2px 'Liberation Mono', monospace;color:#252423;letter-spacing:-1.35px;">7.69</div>
<div style="position:absolute;left:140.00px;top:424.00px;width:23px;height:3px;background:#1a2d9c;"></div>
<div style="position:absolute;left:156.00px;top:419.00px;width:13px;height:12px;background:#050a14;"></div>
<div class="t" style="left:180.20px;top:416.73px;font:normal 22.2px/22.2px 'Liberation Mono', monospace;color:#252423;letter-spacing:-1.35px;">4.97</div>
<div style="position:absolute;left:140.00px;top:457.00px;width:15px;height:3px;background:#1a2d9c;"></div>
<div style="position:absolute;left:149.00px;top:452.00px;width:13px;height:12px;background:#050a14;"></div>
<div class="t" style="left:172.67px;top:449.63px;font:normal 22.2px/22.2px 'Liberation Mono', monospace;color:#252423;letter-spacing:-1.35px;">3.33</div>
<div style="position:absolute;left:140.00px;top:490.00px;width:13px;height:3px;background:#1a2d9c;"></div>
<div style="position:absolute;left:147.00px;top:485.00px;width:13px;height:12px;background:#050a14;"></div>
<div class="t" style="left:170.66px;top:482.43px;font:normal 22.2px/22.2px 'Liberation Mono', monospace;color:#252423;letter-spacing:-1.35px;">2.89</div>
<div style="position:absolute;left:140.00px;top:522.00px;width:12px;height:3px;background:#1a2d9c;"></div>
<div style="position:absolute;left:145.00px;top:518.00px;width:13px;height:12px;background:#050a14;"></div>
<div class="t" style="left:169.37px;top:515.18px;font:normal 22.2px/22.2px 'Liberation Mono', monospace;color:#252423;letter-spacing:-1.35px;">2.61</div>
<div style="position:absolute;left:140.00px;top:555.00px;width:6px;height:3px;background:#1a2d9c;"></div>
<div style="position:absolute;left:139.00px;top:550.00px;width:13px;height:12px;background:#050a14;"></div>
<div class="t" style="left:163.50px;top:547.93px;font:normal 22.2px/22.2px 'Liberation Mono', monospace;color:#252423;letter-spacing:-1.35px;">0.47</div>
<div style="position:absolute;left:140.00px;top:588.00px;width:6px;height:3px;background:#1a2d9c;"></div>
<div style="position:absolute;left:139.00px;top:583.00px;width:13px;height:12px;background:#050a14;"></div>
<div class="t" style="left:163.50px;top:580.83px;font:normal 22.2px/22.2px 'Liberation Mono', monospace;color:#252423;letter-spacing:-1.35px;">0.34</div>
<div style="position:absolute;left:140.00px;top:621.00px;width:39px;height:3px;background:#1a2d9c;"></div>
<div style="position:absolute;left:172.00px;top:616.00px;width:13px;height:12px;background:#050a14;"></div>
<div class="t" style="left:196.21px;top:613.78px;font:bold 22.2px/22.2px 'Liberation Mono', monospace;color:#252423;letter-spacing:-1.35px;">8.46</div>
<div style="position:absolute;left:140.00px;top:655.00px;width:39px;height:3px;background:#1a2d9c;"></div>
<div style="position:absolute;left:172.00px;top:650.00px;width:13px;height:12px;background:#050a14;"></div>
<div class="t" style="left:196.21px;top:647.38px;font:bold 22.2px/22.2px 'Liberation Mono', monospace;color:#252423;letter-spacing:-1.35px;">8.46</div>
<div style="position:absolute;left:140.00px;top:688.00px;width:60px;height:3px;background:#1a2d9c;"></div>
<div style="position:absolute;left:194.00px;top:683.00px;width:13px;height:12px;background:#050a14;"></div>
<div class="t" style="left:217.86px;top:680.88px;font:normal 22.2px/22.2px 'Liberation Mono', monospace;color:#252423;letter-spacing:-1.35px;">13.18</div>
<div style="position:absolute;left:140.00px;top:721.00px;width:23px;height:3px;background:#1a2d9c;"></div>
<div style="position:absolute;left:157.00px;top:716.00px;width:13px;height:12px;background:#050a14;"></div>
<div class="t" style="left:180.52px;top:713.33px;font:normal 22.2px/22.2px 'Liberation Mono', monospace;color:#252423;letter-spacing:-1.35px;">5.04</div>
<div style="position:absolute;left:125.00px;top:753.00px;width:15px;height:3px;background:#d9784f;"></div>
<div style="position:absolute;left:119.00px;top:748.00px;width:13px;height:12px;background:#050a14;"></div>
<div class="t" style="left:-93.21px;width:200px;text-align:right;top:745.98px;font:normal 22.2px/22.2px 'Liberation Mono', monospace;color:#252423;letter-spacing:-1.35px;">-3.12</div>
<div style="position:absolute;left:109.00px;top:786.00px;width:31px;height:3px;background:#d9784f;"></div>
<div style="position:absolute;left:103.00px;top:781.00px;width:13px;height:12px;background:#050a14;"></div>
<div class="t" style="left:-109.31px;width:200px;text-align:right;top:778.38px;font:normal 22.2px/22.2px 'Liberation Mono', monospace;color:#252423;letter-spacing:-1.35px;">-6.63</div>
</div>
<div style="position:absolute;left:249px;top:318px;width:404px;height:806px;border:2px solid #3a82c4;box-sizing:border-box;"></div>
<div style="position:absolute;left:6px;top:1247.5px;width:2293px;height:1px;background:#dedede;"></div>
<div class="t" style="left:6.00px;top:1261.05px;font:normal 21.2px/21.2px 'Liberation Sans', sans-serif;color:#252423;">Total rows: 22</div>
<div class="t" style="left:161.50px;top:1261.05px;font:normal 21.2px/21.2px 'Liberation Sans', sans-serif;color:#252423;">Sum:</div>
<div class="t" style="left:218.00px;top:1261.05px;font:normal 21.2px/21.2px 'Liberation Sans', sans-serif;color:#252423;letter-spacing:0.55px;">347.45k</div>
<div class="t" style="left:322.00px;top:1261.05px;font:normal 21.2px/21.2px 'Liberation Sans', sans-serif;color:#252423;">Avg:</div>
<div class="t" style="left:372.00px;top:1261.05px;font:normal 21.2px/21.2px 'Liberation Sans', sans-serif;color:#252423;letter-spacing:0.55px;">15.79k</div>
<div class="t" style="left:464.50px;top:1261.05px;font:normal 21.2px/21.2px 'Liberation Sans', sans-serif;color:#252423;">Count:</div>
<div class="t" style="left:537.50px;top:1261.05px;font:normal 21.2px/21.2px 'Liberation Sans', sans-serif;color:#252423;">22</div>
<svg style="position:absolute;left:570px;top:1255px;" width="50" height="35" viewBox="0 0 50 35">
<path d="M13.8 17.4 A10.6 10.6 0 0 1 34.6 17.4" fill="none" stroke="#333" stroke-width="1.7"/>
<path d="M21 14.5 A3.6 3.6 0 1 0 27.4 17.5" fill="none" stroke="#333" stroke-width="1.7"/>
<path d="M14.7 8.3 L31.8 25.5" stroke="#fff" stroke-width="3.2"/>
<path d="M14.7 8.3 L31.8 25.5" stroke="#333" stroke-width="1.7"/>
</svg>
<svg style="position:absolute;left:1662px;top:1257px;" width="34" height="34" viewBox="0 0 34 34">
<g transform="translate(17,16.5)">
<path d="M-2.5 -14 L2.5 -14 L3.2 -10.2 L6.2 -8.8 L9.4 -11 L12.9 -7.5 L10.7 -4.3 L11.8 -1.3 L15.6 -0.6 L15.6 4.4 L11.8 5.1 L10.4 8.3 L12.6 11.5 L9.1 15 L5.9 12.8 L2.8 14.1 L2.1 17.9 L-2.9 17.9 L-3.6 14.1 L-6.6 12.8 L-9.8 15 L-13.3 11.5 L-11.1 8.3 L-12.4 5.1 L-16.2 4.4 L-16.2 -0.6 L-12.4 -1.3 L-11.1 -4.3 L-13.3 -7.5 L-9.8 -11 L-6.6 -8.8 L-3.2 -10.2 Z" transform="translate(0.3,-2) scale(0.9)" fill="none" stroke="#333" stroke-width="1.9" stroke-linejoin="round"/>
<circle cx="0" cy="0" r="6" fill="none" stroke="#1f5fb5" stroke-width="1.9"/>
</g>
</svg>
<div style="position:absolute;left:1714px;top:1274.2px;width:18px;height:2px;background:#222;"></div>
<div style="position:absolute;left:1747.5px;top:1258.5px;width:99px;height:36px;border:2px solid #a8a8a8;box-sizing:border-box;background:#fff;"></div>
<div class="t" style="left:1770.00px;top:1267.75px;font:normal 22.5px/22.5px 'Liberation Mono', monospace;color:#252423;letter-spacing:-1.7px;">100</div>
<div class="t" style="left:1808.00px;top:1266.80px;font:normal 21.5px/21.5px 'Liberation Sans', sans-serif;color:#252423;">%</div>
<div style="position:absolute;left:1858.5px;top:1274.8px;width:18px;height:2px;background:#222;"></div>
<div style="position:absolute;left:1866.5px;top:1266.5px;width:2px;height:18.5px;background:#222;"></div>
<div class="t" style="left:1928.00px;top:1261.76px;font:normal 20.6px/20.6px 'Liberation Sans', sans-serif;color:#252423;">22 records</div>
<svg style="position:absolute;left:2044px;top:1258px;" width="50" height="26" viewBox="0 0 50 26">
<rect x="4.6" y="4" width="3.8" height="18" fill="#9a9a9a"/>
<path d="M22.5 5 L14 13 L22.5 21" fill="none" stroke="#9a9a9a" stroke-width="3"/>
<path d="M44.5 5 L36 13 L44.5 21" fill="none" stroke="#9a9a9a" stroke-width="3"/>
</svg>
<div class="t" style="left:2101.00px;top:1261.76px;font:normal 20.6px/20.6px 'Liberation Sans', sans-serif;color:#252423;">Page 1 of 1</div>
<svg style="position:absolute;left:2214px;top:1258px;" width="50" height="26" viewBox="0 0 50 26">
<path d="M5.5 5 L14 13 L5.5 21" fill="none" stroke="#9a9a9a" stroke-width="3"/>
<path d="M27.5 5 L36 13 L27.5 21" fill="none" stroke="#9a9a9a" stroke-width="3"/>
<rect x="42" y="4" width="3.2" height="18" fill="#9a9a9a"/>
</svg>
<svg style="position:absolute;left:2260px;top:1250px;" width="44" height="44" viewBox="0 0 44 44">
<rect x="7" y="7" width="6.5" height="6" fill="#c8c8c8"/>
<rect x="7" y="19.5" width="6.5" height="6" fill="#c8c8c8"/>
<rect x="6.2" y="31" width="8" height="8" fill="#ff3333"/>
<rect x="19.5" y="7" width="6.5" height="6" fill="#c8c8c8"/>
<rect x="19" y="18.5" width="8" height="20.5" fill="#ffb000"/>
<rect x="31" y="6.5" width="8" height="32.5" fill="#5cd24e"/>
</svg>
<div style="position:absolute;left:0px;top:636px;width:2px;height:24px;background:#929292;"></div>
<div style="position:absolute;left:2301.5px;top:636px;width:3px;height:24px;background:#929292;"></div>
<div style="position:absolute;left:1140px;top:1299.5px;width:23.5px;height:4px;background:#8c8c8c;"></div>
<div style="position:absolute;left:0px;top:1288px;width:2.5px;height:15px;background:#9a9a9a;"></div>
<div style="position:absolute;left:0px;top:1300px;width:14px;height:3px;background:#9a9a9a;"></div>
<div style="position:absolute;left:2301px;top:1288px;width:3px;height:15px;background:#9a9a9a;"></div>
<div style="position:absolute;left:2289.5px;top:1300px;width:14.5px;height:3px;background:#9a9a9a;"></div>
<div style="position:absolute;left:5px;top:1303px;width:1px;height:3px;background:#c8c8c8;"></div>
<div style="position:absolute;left:220px;top:1303px;width:1px;height:3px;background:#c8c8c8;"></div>
<div style="position:absolute;left:329px;top:1303px;width:1px;height:3px;background:#c8c8c8;"></div>
<div style="position:absolute;left:574px;top:1303px;width:1px;height:3px;background:#c8c8c8;"></div>
<div style="position:absolute;left:884px;top:1303px;width:1px;height:3px;background:#c8c8c8;"></div>
<div style="position:absolute;left:1266px;top:1303px;width:1px;height:3px;background:#c8c8c8;"></div>
<div style="position:absolute;left:1602px;top:1303px;width:1px;height:3px;background:#c8c8c8;"></div>
<div style="position:absolute;left:1769px;top:1303px;width:1px;height:3px;background:#c8c8c8;"></div>
<div style="position:absolute;left:1986px;top:1303px;width:1px;height:3px;background:#c8c8c8;"></div>
<div style="position:absolute;left:2251px;top:1303px;width:1px;height:3px;background:#c8c8c8;"></div>
</body></html>
